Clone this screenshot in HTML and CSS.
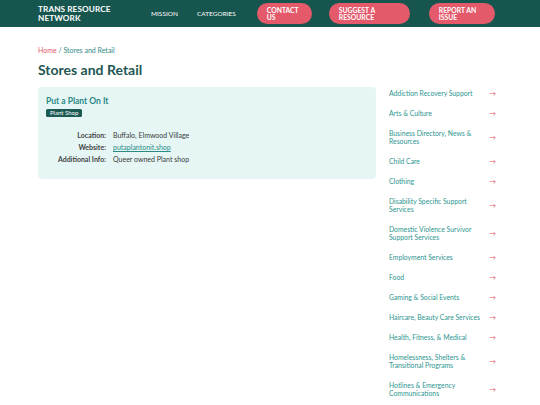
FILE: index.html
```
<!DOCTYPE html>
<html>
<head>
<meta charset="utf-8">
<link rel="stylesheet" href="styles.css">
</head>
<body>
<header class="topbar">
  <div class="brand">TRANS RESOURCE<br>NETWORK</div>
  <nav class="nav">
    <a class="nav-link">MISSION</a>
    <a class="nav-link">CATEGORIES</a>
    <a class="btn btn-contact">CONTACT<br>US</a>
    <a class="btn btn-suggest">SUGGEST A<br>RESOURCE</a>
    <a class="btn btn-report">REPORT AN<br>ISSUE</a>
  </nav>
</header>
<div class="page">
  <div class="crumbs"><span class="home">Home</span> / Stores and Retail</div>
  <h1 class="title">Stores and Retail</h1>
  <div class="columns">
    <main class="main">
      <div class="card">
        <h2 class="card-title">Put a Plant On It</h2>
        <span class="badge">Plant Shop</span>
        <div class="details">
          <div class="label">Location:</div><div class="value">Buffalo, Elmwood Village</div>
          <div class="label">Website:</div><div class="value"><a class="link">putaplantonit.shop</a></div>
          <div class="label">Additional Info:</div><div class="value">Queer owned Plant shop</div>
        </div>
      </div>
    </main>
    <aside class="sidebar">
      <a class="cat"><span>Addiction Recovery Support</span><i>→</i></a>
      <a class="cat"><span>Arts &amp; Culture</span><i>→</i></a>
      <a class="cat"><span>Business Directory, News &amp; Resources</span><i>→</i></a>
      <a class="cat"><span>Child Care</span><i>→</i></a>
      <a class="cat"><span>Clothing</span><i>→</i></a>
      <a class="cat"><span>Disability Specific Support Services</span><i>→</i></a>
      <a class="cat"><span>Domestic Violence Survivor Support Services</span><i>→</i></a>
      <a class="cat"><span>Employment Services</span><i>→</i></a>
      <a class="cat"><span>Food</span><i>→</i></a>
      <a class="cat"><span>Gaming &amp; Social Events</span><i>→</i></a>
      <a class="cat"><span>Haircare, Beauty Care Services</span><i>→</i></a>
      <a class="cat"><span>Health, Fitness, &amp; Medical</span><i>→</i></a>
      <a class="cat"><span>Homelessness, Shelters &amp; Transitional Programs</span><i>→</i></a>
      <a class="cat"><span>Hotlines &amp; Emergency Communications</span><i>→</i></a>
    </aside>
  </div>
</div>
</body>
</html>
```
FILE: styles.css
```
* { box-sizing: border-box; }
body {
  margin: 0;
  font-family: Lato, "Open Sans", sans-serif;
  background: #fff;
  overflow: hidden;
}
.topbar {
  height: 27px;
  background: #17554f;
  display: flex;
  align-items: center;
  padding-left: 38px;
}
.brand {
  color: #fff;
  font-weight: 700;
  font-size: 8.2px;
  line-height: 8.5px;
  letter-spacing: 0.1px;
  width: 113px;
}
.nav {
  display: flex;
  align-items: center;
}
.nav-link {
  color: #fff;
  font-size: 6.5px;
  margin-right: 19px;
}
.nav-link + .nav-link { margin-right: 21px; }
.btn {
  background: #e55a6b;
  color: #fff;
  font-weight: 700;
  font-size: 6.8px;
  line-height: 7px;
  border-radius: 11px;
  height: 21px;
  display: flex;
  align-items: center;
  padding-left: 10px;
}
.btn-contact { width: 55px; margin-right: 17px; }
.btn-suggest { width: 81px; margin-right: 19px; }
.btn-report { width: 66px; }
.page {
  padding: 19px 38px 0 38px;
}
.crumbs {
  font-size: 7px;
  color: #2f8a86;
  line-height: 9px;
}
.home { color: #e55a6b; }
.title {
  margin: 6px 0 9px 0;
  font-size: 14px;
  line-height: 17px;
  font-weight: 700;
  color: #1f5753;
}
.columns {
  display: flex;
  align-items: flex-start;
}
.main { width: 338px; }
.card {
  background: #e5f6f5;
  border-radius: 4px;
  padding: 9px 8px 15px 8px;
}
.card-title {
  margin: 0;
  font-size: 8.5px;
  line-height: 10px;
  color: #2a8985;
  font-weight: 700;
}
.badge {
  display: block;
  width: fit-content;
  margin-top: 3px;
  background: #1d5a53;
  color: #fff;
  font-size: 6px;
  line-height: 8px;
  padding: 0 4px;
  border-radius: 1.5px;
}
.details {
  margin-top: 14px;
  display: grid;
  grid-template-columns: 60px auto;
  column-gap: 7px;
  row-gap: 3px;
  font-size: 7px;
  line-height: 9px;
  color: #3a3a3a;
}
.label { text-align: right; font-weight: 700; color: #444; }
.link { color: #2a8985; text-decoration: underline; }
.sidebar {
  margin-left: 13px;
  width: 108px;
  display: flex;
  flex-direction: column;
  gap: 12px;
  padding-top: 1.5px;
}
.cat {
  display: flex;
  align-items: center;
  justify-content: space-between;
  font-size: 6.8px;
  line-height: 8px;
  color: #2e9591;
}
.cat span { width: 96px; }
.cat i {
  font-style: normal;
  color: #e55a6b;
  font-size: 7px;
  margin-right: 1px;
}
```
